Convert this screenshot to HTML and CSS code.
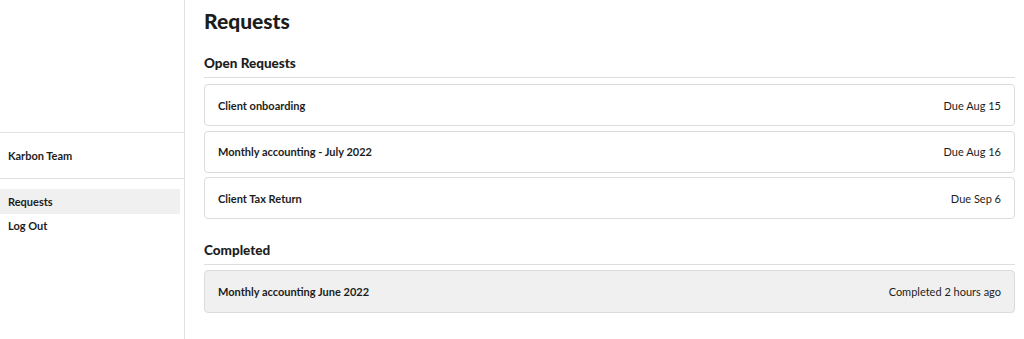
FILE: index.html
```html
<!DOCTYPE html>
<html>
<head>
<meta charset="utf-8">
<link rel="stylesheet" href="styles.css">
</head>
<body>
<div class="app">
  <aside class="sidebar">
    <div class="team">Karbon Team</div>
    <nav class="nav">
      <div class="nav-item active">Requests</div>
      <div class="nav-item">Log Out</div>
    </nav>
  </aside>
  <main class="main">
    <h1 class="title">Requests</h1>
    <section class="section">
      <h2 class="section-title">Open Requests</h2>
      <div class="list">
        <div class="card"><span class="name">Client onboarding</span><span class="meta">Due Aug 15</span></div>
        <div class="card"><span class="name">Monthly accounting - July 2022</span><span class="meta">Due Aug 16</span></div>
        <div class="card"><span class="name">Client Tax Return</span><span class="meta">Due Sep 6</span></div>
      </div>
    </section>
    <section class="section completed">
      <h2 class="section-title">Completed</h2>
      <div class="list">
        <div class="card done"><span class="name">Monthly accounting June 2022</span><span class="meta">Completed 2 hours ago</span></div>
      </div>
    </section>
  </main>
</div>
</body>
</html>
```
FILE: styles.css
```css
* { box-sizing: border-box; }
html, body { margin: 0; padding: 0; background: #fff; }
body { font-family: Lato, "Noto Sans", sans-serif; color: #1d1d1d; }
.app { display: flex; height: 339px; }
.sidebar { width: 185px; border-right: 1px solid #e2e2e2; padding-top: 132px; flex-shrink: 0; }
.team { border-top: 1px solid #e2e2e2; border-bottom: 1px solid #e2e2e2; height: 47px; display: flex; align-items: center; padding-left: 8px; font-size: 11px; font-weight: 700; }
.nav { padding-top: 10px; padding-right: 4px; }
.nav-item { height: 25px; display: flex; align-items: center; padding-left: 8px; font-size: 11px; font-weight: 700; }
.nav-item + .nav-item { padding-bottom: 2px; }
.nav-item.active { background: #f0f0f0; }
.main { flex: 1; padding: 0 9px 0 19px; }
.title { margin: 0; padding-top: 7px; font-size: 21px; font-weight: 900; line-height: 28px; }
.section { margin-top: 19px; }
.section.completed { margin-top: 22px; }
.section-title { margin: 0; font-size: 13.5px; font-weight: 900; line-height: 19px; padding-bottom: 4px; border-bottom: 1px solid #dedede; }
.list { display: flex; flex-direction: column; gap: 4.5px; margin-top: 6px; }
.completed .list { margin-top: 5px; }
.card { height: 42px; border: 1px solid #dcdcdc; border-radius: 4px; display: flex; align-items: center; justify-content: space-between; padding: 0 13px; font-size: 11px; }
.card .name { font-weight: 700; }
.card .meta { font-weight: 400; }
.card.done { background: #f0f0f0; height: 43px; }
```
